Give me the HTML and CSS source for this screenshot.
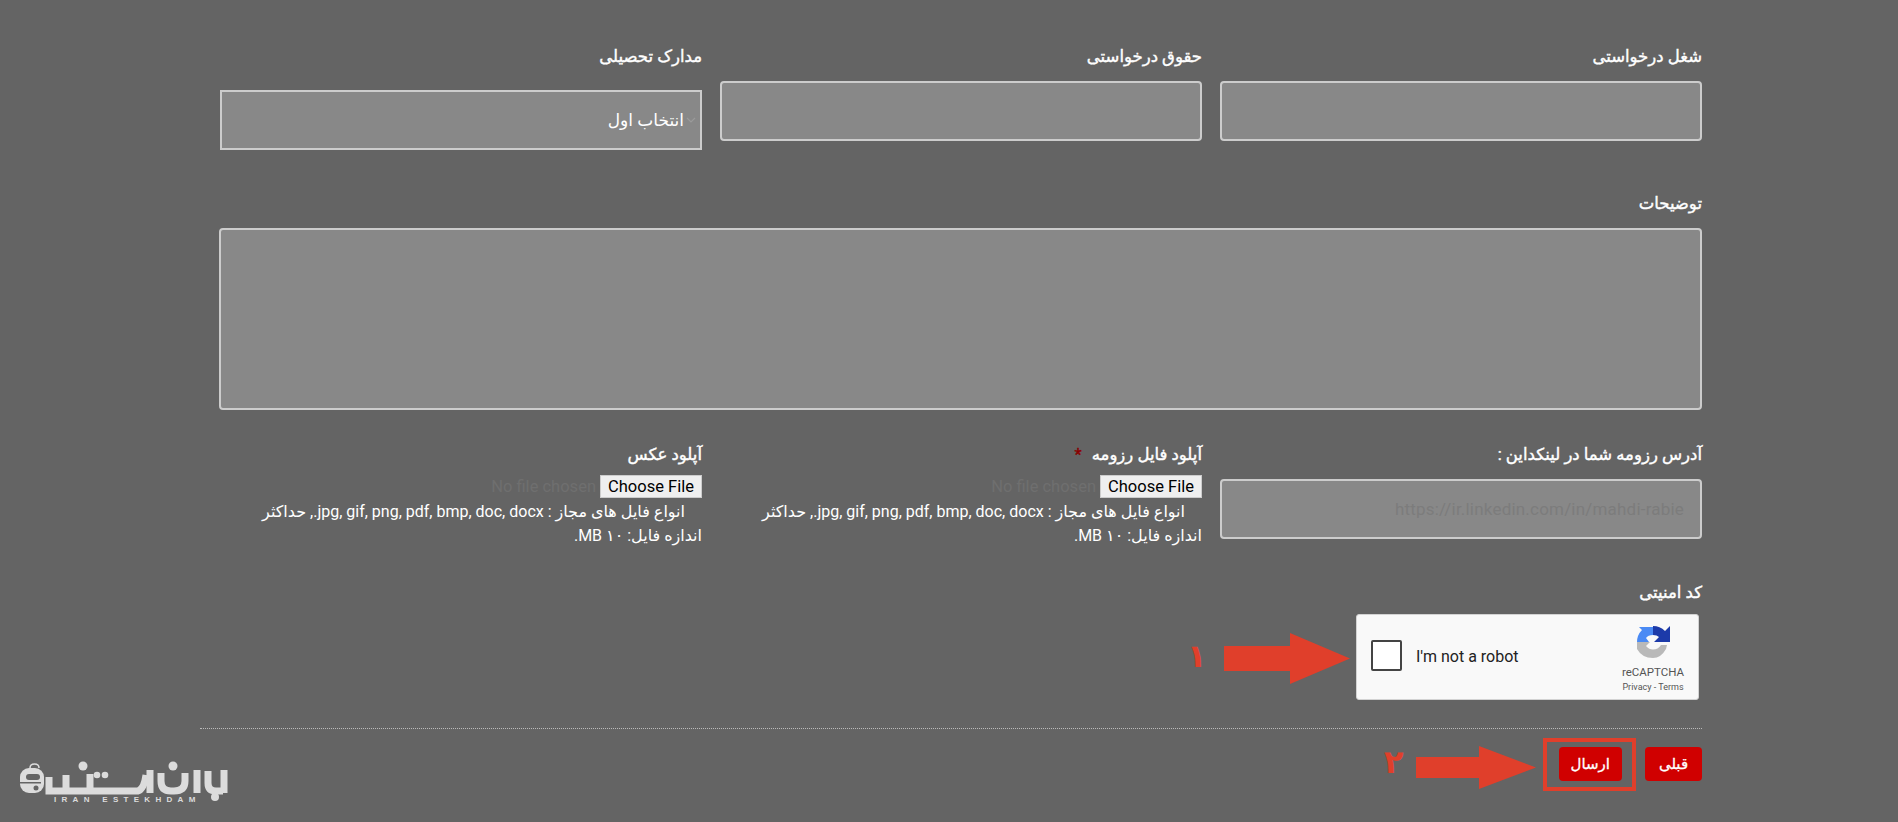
FILE: index.html
```
<!DOCTYPE html>
<html lang="fa" dir="rtl">
<head>
    <meta charset="utf-8">
    <title>فرم ارسال رزومه</title>
    <link rel="stylesheet" href="styles.css">
</head>
<body>
    <div class="page">
        <form class="form">
            <div class="row row-first">
                <div class="field">
                    <label class="label">شغل درخواستی</label>
                    <input class="input" type="text">
                </div>
                <div class="field">
                    <label class="label">حقوق درخواستی</label>
                    <input class="input" type="text">
                </div>
                <div class="field">
                    <label class="label">مدارک تحصیلی</label>
                    <div class="select">
                        <svg class="chevron" width="10" height="6" viewBox="0 0 10 6"><path d="M1 1l4 4 4-4" fill="none" stroke="#9a9a9a" stroke-width="1.2"/></svg>
                        <span>انتخاب اول</span>
                    </div>
                </div>
            </div>

            <div class="block-notes">
                <label class="label">توضیحات</label>
                <textarea class="textarea"></textarea>
            </div>

            <div class="row row-files">
                <div class="field">
                    <label class="label">آدرس رزومه شما در لینکداین :</label>
                    <input class="input" type="text" placeholder="https://ir.linkedin.com/in/mahdi-rabie">
                </div>
                <div class="field">
                    <label class="label">آپلود فایل رزومه <span class="required">*</span></label>
                    <input class="file" type="file">
                    <p class="hint">انواع فایل های مجاز : jpg, gif, png, pdf, bmp, doc, docx., حداکثر<br>اندازه فایل: ۱۰ MB.</p>
                </div>
                <div class="field">
                    <label class="label">آپلود عکس</label>
                    <input class="file" type="file">
                    <p class="hint">انواع فایل های مجاز : jpg, gif, png, pdf, bmp, doc, docx., حداکثر<br>اندازه فایل: ۱۰ MB.</p>
                </div>
            </div>

            <div class="block-captcha">
                <label class="label">کد امنیتی</label>
                <div class="captcha" dir="ltr">
                    <span class="captcha-box"></span>
                    <span class="captcha-text">I'm not a robot</span>
                    <div class="captcha-brand">
                        <svg width="33" height="33" viewBox="0 0 33 33">
                            <path d="M0 17H13L9 21Q12 24.500 16 24.500Q21 24.500 24 20H30L29 24Q24 33 16 33Q5 33 0 24Z" fill="#b9b9b9"/>
                            <path d="M0 17Q0 10 5 5L2 2H16V10Q11 10 9 13L12 17Z" fill="#4a8af4"/>
                            <path d="M16 1Q23 1 28 6L33 1V17H17L22 12Q20 10 16 10Z" fill="#1c3aa9"/>
                        </svg>
                        <span class="captcha-name">reCAPTCHA</span>
                        <span class="captcha-links">Privacy - Terms</span>
                    </div>
                </div>
            </div>

            <hr class="divider">

            <div class="actions">
                <button class="btn" type="button">قبلی</button>
                <button class="btn" type="button">ارسال</button>
            </div>
        </form>

        <!-- annotations drawn over the form -->
        <span class="mark mark-one">۱</span>
        <svg class="arrow arrow-one" width="126" height="51" viewBox="0 0 126 51"><path d="M0 13h66V0l60 25.500L66 51V38H0z" fill="#e03f2b"/></svg>
        <span class="mark mark-two">۲</span>
        <svg class="arrow arrow-two" width="120" height="43" viewBox="0 0 120 43"><path d="M0 11h63V0l57 21.500L63 43V32H0z" fill="#e03f2b"/></svg>
        <div class="highlight"></div>

        <div class="logo" dir="ltr">
            <svg width="240" height="55" viewBox="0 0 240 55">
                <!-- bag -->
                <path d="M30 13q0-4 4.500-4t4.500 4" fill="none" stroke="#dcdcdc" stroke-width="1.500"/>
                <rect x="20" y="13" width="24" height="25" rx="9" fill="#dcdcdc"/>
                <rect x="26" y="19" width="14" height="6" rx="3" fill="#646464"/>
                <rect x="20" y="27" width="21" height="1.500" fill="#646464"/>
                <circle cx="36" cy="33" r="2.500" fill="#646464"/>
                <!-- letters -->
                <g fill="none" stroke="#dcdcdc" stroke-width="7">
                    <path d="M49 22v14h89q6-2 8-16"/>
                    <path d="M66 20v16"/>
                    <path d="M90 19v17"/>
                    <path d="M150 15v23"/>
                    <path d="M161 18v8q0 10 10 10h3q11 0 11-10v-8"/>
                    <path d="M197 15v23"/>
                    <path d="M208 16v12q0 8 8 8h7"/>
                    <path d="M224 15v23"/>
                </g>
                <g fill="#dcdcdc">
                    <circle cx="83" cy="11" r="4.500"/>
                    <circle cx="97" cy="20" r="3.300"/>
                    <circle cx="105" cy="20" r="3.300"/>
                    <circle cx="173" cy="11" r="4.500"/>
                    <circle cx="215" cy="42" r="4"/>
                </g>
            </svg>
            <span class="logo-text">IRAN ESTEKHDAM</span>
        </div>
    </div>
</body>
</html>
```

FILE: styles.css
```
html, body {
    margin: 0;
    padding: 0;
    overflow: hidden;
}

body {
    background: #646464;
    color: #fff;
    font-family: Roboto, "DejaVu Sans", sans-serif;
    font-size: 15px;
}

.page {
    position: relative;
    height: 822px;
}

.form {
    padding: 45px 196px 0 200px;
}

.row {
    display: grid;
    grid-template-columns: repeat(3, 482px);
    column-gap: 18px;
    padding-left: 16px;
    align-items: start;
}

.label {
    display: block;
    height: 24px;
    line-height: 24px;
    font-size: 16.500px;
    -webkit-text-stroke: 0.4px #fff;
}

.required {
    color: #8b0000;
    -webkit-text-stroke: 0.4px #8b0000;
    margin-right: 6px;
}

.input {
    display: block;
    box-sizing: border-box;
    width: 100%;
    height: 60px;
    margin-top: 12px;
    background: #888;
    border: 2px solid #ccc;
    border-radius: 4px;
    padding: 0 16px;
    font-family: Roboto, sans-serif;
    font-size: 17px;
    letter-spacing: 0.2px;
    color: #fff;
}

.input::placeholder {
    color: #7c7c7c;
}

.select {
    box-sizing: border-box;
    height: 60px;
    margin-top: 21px;
    background: #888;
    border: 2px solid #ccc;
    padding: 0 4px;
    display: flex;
    align-items: center;
    gap: 2px;
    font-size: 17px;
}

.block-notes {
    margin-top: 42px;
}

.textarea {
    display: block;
    box-sizing: border-box;
    width: 1483px;
    height: 182px;
    margin: 12px 0 0 0;
    background: #888;
    border: 2px solid #ccc;
    border-radius: 4px;
    resize: none;
}

.row-files {
    margin-top: 33px;
}

.file {
    display: block;
    width: 100%;
    margin-top: 8px;
    font-family: Roboto, sans-serif;
    font-size: 16.500px;
    line-height: 23px;
    color: #6f6f6f;
}

.file::file-selector-button {
    height: 23px;
    width: 102px;
    padding: 0;
    margin: 0 0 0 4px;
    background: #efefef;
    border: 1px solid #ccc;
    border-radius: 0;
    color: #000;
    font-family: Roboto, sans-serif;
    font-size: 16.500px;
}

.hint {
    margin: 2px 0 0 0;
    font-size: 16px;
    line-height: 24px;
    text-indent: 17px;
}

.block-captcha {
    margin-top: 33px;
}

.captcha {
    box-sizing: border-box;
    width: 343px;
    height: 86px;
    margin: 9px 3px 0 0;
    background: #f9f9f9;
    border: 1px solid #d3d3d3;
    border-radius: 3px;
    display: flex;
    align-items: center;
    color: #222;
    padding-left: 14px;
}

.captcha-box {
    box-sizing: border-box;
    width: 31px;
    height: 31px;
    margin-bottom: 3px;
    background: #fff;
    border: 2px solid #444;
    border-radius: 2px;
}

.captcha-text {
    margin: 0 0 1px 14px;
    font-family: Roboto, sans-serif;
    font-size: 16px;
}

.captcha-brand {
    margin-left: auto;
    margin-top: 3px;
    width: 70px;
    margin-right: 10px;
    display: flex;
    flex-direction: column;
    align-items: center;
    color: #555;
    font-family: Roboto, sans-serif;
}

.captcha-name {
    font-size: 11.500px;
    line-height: 12px;
    margin-top: 8px;
}

.captcha-links {
    font-size: 9px;
    line-height: 10px;
    margin-top: 4px;
}

.divider {
    margin: 28px 0 0 0;
    border: none;
    border-top: 1px dotted #bbb;
}

.actions {
    margin-top: 18px;
    display: flex;
    gap: 23px;
}

.btn {
    height: 34px;
    min-width: 57px;
    background: #d00000;
    border: none;
    border-radius: 4px;
    padding: 0 12px;
    color: #fff;
    font-family: "DejaVu Sans", sans-serif;
    font-size: 15px;
    -webkit-text-stroke: 0.3px #fff;
}

/* annotations */
.arrow {
    position: absolute;
}

.arrow-one {
    left: 1224px;
    top: 633px;
}

.arrow-two {
    left: 1416px;
    top: 746px;
}

.mark {
    position: absolute;
    color: #e03f2b;
    font-family: "DejaVu Sans", sans-serif;
    font-weight: bold;
    font-size: 32px;
    line-height: 40px;
}

.mark-one {
    left: 1187px;
    top: 636px;
}

.mark-two {
    left: 1384px;
    top: 742px;
}

.highlight {
    position: absolute;
    left: 1543px;
    top: 738px;
    width: 85px;
    height: 45px;
    border: 4px solid #e03f2b;
}

.logo {
    position: absolute;
    left: 0;
    top: 755px;
    width: 240px;
}

.logo svg {
    display: block;
}

.logo-text {
    position: absolute;
    left: 54px;
    top: 41px;
    font-family: "Liberation Sans", sans-serif;
    font-weight: bold;
    font-size: 8px;
    line-height: 8px;
    letter-spacing: 5.300px;
    color: #dcdcdc;
    white-space: nowrap;
}
```
